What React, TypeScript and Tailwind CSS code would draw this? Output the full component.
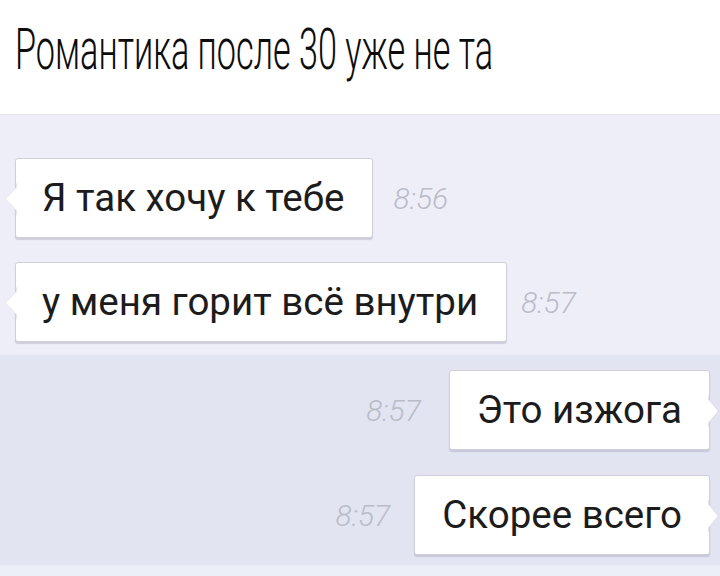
import React from "react";

const roboto = { fontFamily: "Roboto, 'Liberation Sans', sans-serif" };

function LeftBubble({ text }: { text: string }) {
  return (
    <div className="relative ml-[15px] h-[80px] flex items-center rounded-[3px] border border-[#cfd0da] bg-white pl-[26px] pr-[28px] shadow-[0_2px_1px_rgba(150,150,170,0.35)]">
      <svg className="absolute left-[-13px] top-[24px]" width="14" height="32" viewBox="0 0 14 32">
        <path d="M14 0 L14 4 L2 16 L14 28 L14 32" fill="white" stroke="#cfd0da" strokeWidth="1" />
        <path d="M14 4 L2 16 L14 28 Z" fill="white" />
      </svg>
      <span className="text-[38.5px] leading-none text-[#1c1c1c]" style={roboto}>{text}</span>
    </div>
  );
}

function RightBubble({ text }: { text: string }) {
  return (
    <div className="relative mr-[10px] h-[80px] flex items-center rounded-[3px] border border-[#cfd0da] bg-white pl-[27px] pr-[27px] shadow-[0_2px_1px_rgba(150,150,170,0.35)]">
      <svg className="absolute right-[-10px] top-[24px]" width="11" height="32" viewBox="0 0 11 32">
        <path d="M0 0 L0 4 L10 16 L0 28 L0 32" fill="white" stroke="#cfd0da" strokeWidth="1" />
        <path d="M0 4 L10 16 L0 28 Z" fill="white" />
      </svg>
      <span className="text-[38.5px] leading-none text-[#1c1c1c]" style={roboto}>{text}</span>
    </div>
  );
}

function Time({ t }: { t: string }) {
  return (
    <span className="text-[30px] italic font-light text-[#babcc8]" style={roboto}>{t}</span>
  );
}

export default function App() {
  return (
    <div className="w-[720px] h-[576px] overflow-hidden flex flex-col bg-white">
      <div className="h-[115px] shrink-0 bg-white border-b border-[#e6e6ee] flex items-start pl-[15px] pt-[20px]">
        <h1
          className="text-[58px] leading-none font-light text-[#0c0c0c] origin-top-left scale-x-[0.59] whitespace-nowrap"
          style={roboto}
        >
          Романтика после 30 уже не та
        </h1>
      </div>
      <div className="h-[240px] shrink-0 bg-[#eeeef8] flex flex-col gap-[24px] pt-[43px]">
        <div className="flex items-center gap-[20px]">
          <LeftBubble text="Я так хочу к тебе" />
          <Time t="8:56" />
        </div>
        <div className="flex items-center gap-[14px]">
          <LeftBubble text="у меня горит всё внутри" />
          <Time t="8:57" />
        </div>
      </div>
      <div className="h-[210px] shrink-0 bg-[#e2e4f2] flex flex-col items-end gap-[25px] pt-[15px]">
        <div className="flex items-center gap-[28px]">
          <Time t="8:57" />
          <RightBubble text="Это изжога" />
        </div>
        <div className="flex items-center gap-[24px]">
          <Time t="8:57" />
          <RightBubble text="Скорее всего" />
        </div>
      </div>
      <div className="flex-1 bg-[#eceef8]" />
    </div>
  );
}
